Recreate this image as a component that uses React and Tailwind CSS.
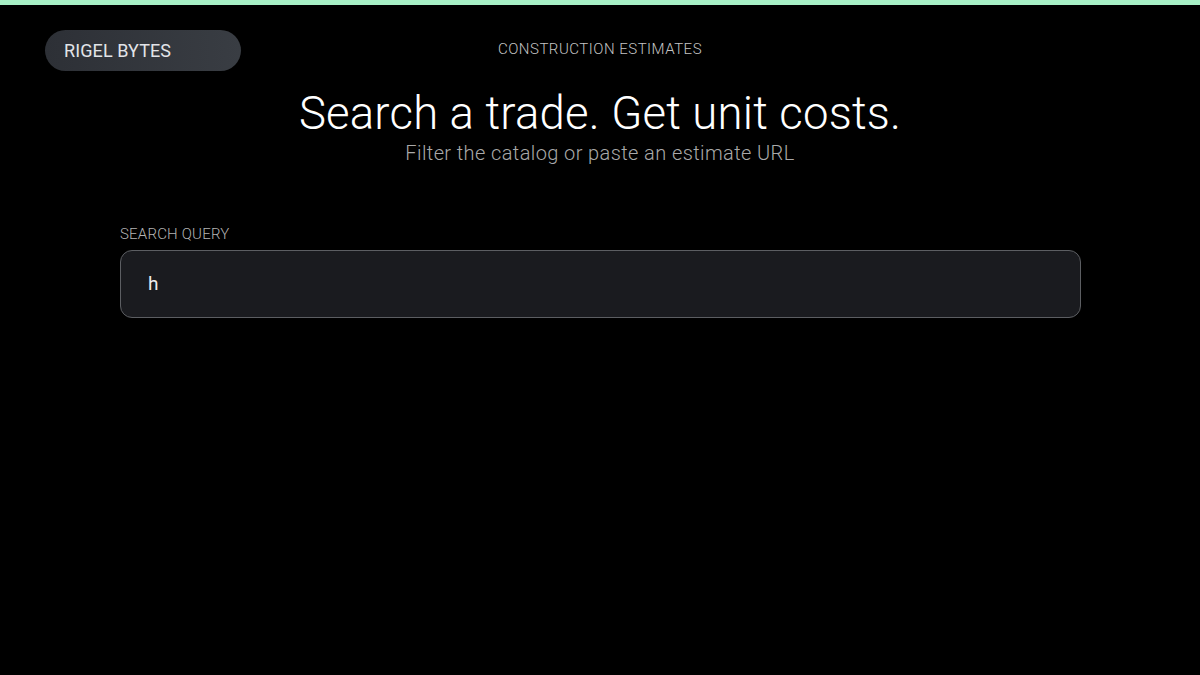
import React from 'react';

const App = () => {
    return (
        <div className="w-[1200px] h-[675px] bg-black overflow-hidden" style={{ fontFamily: 'Roboto, "Liberation Sans", sans-serif' }}>
            {/* top accent */}
            <div className="h-[5px] bg-[#a8f0c6]" />

            <div className="relative">
                {/* brand pill */}
                <div className="absolute left-[45px] top-[25px] w-[196px] h-[41px] rounded-full bg-gradient-to-r from-[#2d3036] to-[#393d43] flex items-center pl-[19px]">
                    <span className="text-[18px] text-[#e2e4e8] tracking-[0.1px]">RIGEL BYTES</span>
                </div>

                <div className="flex flex-col items-center pt-[35px]">
                    <p className="text-[15px] leading-[18px] text-[#c4c4c4] font-light tracking-[0.5px]">CONSTRUCTION ESTIMATES</p>
                    <h1 className="mt-[29px] text-[45.5px] leading-[54px] text-white font-light tracking-[0.2px]">Search a trade. Get unit costs.</h1>
                    <p className="mt-[0px] text-[20px] leading-[24px] text-[#a9a9a9] font-light tracking-[0.4px]">Filter the catalog or paste an estimate URL</p>
                </div>

                <div className="px-[120px] pt-[60px] w-[1201px]">
                    <label className="block text-[15px] leading-[18px] text-[#b4b4b4] font-light tracking-[0.2px]">SEARCH QUERY</label>
                    <div className="mt-[7px] h-[68px] rounded-[12px] border border-[#5c5e62] bg-[#1a1b1f] flex items-center px-[27px]">
                        <span className="text-[19px] text-[#ececec]">h</span>
                    </div>
                </div>
            </div>
        </div>
    );
};

export default App;
